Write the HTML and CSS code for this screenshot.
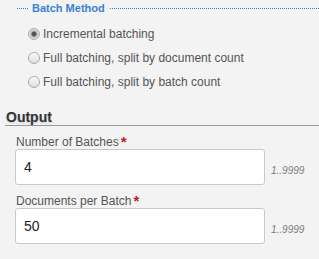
FILE: index.html
```html
<!DOCTYPE html>
<html lang="en">
<head>
<meta charset="utf-8">
<title>Batch settings</title>
<link rel="stylesheet" href="styles.css">
</head>
<body>
<div class="group">
  <div class="legend">
    <span class="legend-lead"></span>
    <span class="legend-text">Batch Method</span>
    <span class="legend-rule"></span>
  </div>
  <div class="options">
    <label class="option"><span class="radio radio-checked"></span>Incremental batching</label>
    <label class="option"><span class="radio"></span>Full batching, split by document count</label>
    <label class="option"><span class="radio"></span>Full batching, split by batch count</label>
  </div>
</div>
<section class="output">
  <h2 class="heading">Output</h2>
  <div class="field">
    <div class="field-label">Number of Batches<span class="req">*</span></div>
    <div class="field-row">
      <input class="field-input" type="text" value="4">
      <span class="range">1..9999</span>
    </div>
  </div>
  <div class="field">
    <div class="field-label">Documents per Batch<span class="req">*</span></div>
    <div class="field-row">
      <input class="field-input" type="text" value="50">
      <span class="range">1..9999</span>
    </div>
  </div>
</section>
</body>
</html>
```
FILE: styles.css
```css
html, body {
  margin: 0;
  padding: 0;
  background: #f3f3f3;
  font-family: "Liberation Sans", Arial, sans-serif;
}

.legend {
  display: flex;
  align-items: center;
  height: 17px;
  margin-left: 17px;
}

.legend-lead {
  width: 11px;
  height: 0;
  border-top: 1px dotted #3a80d2;
}

.legend-rule {
  flex: 1;
  height: 0;
  border-top: 1px dotted #3a80d2;
}

.legend-text {
  padding: 0 5px 0 4px;
  font-size: 11px;
  font-weight: bold;
  color: #3a80d2;
  line-height: 13px;
}

.options {
  padding-top: 5px;
  display: flex;
  flex-direction: column;
}

.option {
  display: flex;
  align-items: center;
  height: 24px;
  padding-left: 28px;
  font-size: 12px;
  color: #555;
}

.radio {
  box-sizing: border-box;
  width: 12px;
  height: 12px;
  margin-right: 3px;
  border-radius: 50%;
  border: 1px solid #ababab;
  background: linear-gradient(#fbfbfb, #dcdcdc);
}

.radio-checked {
  background: radial-gradient(circle, #4a4a4a 0, #5a5a5a 2px, #b9b9b9 3px, #e6e6e6 5px);
}

.output {
  margin-top: 15px;
}

.heading {
  margin: 0 0 0 5px;
  padding-left: 1px;
  font-size: 14px;
  font-weight: bold;
  line-height: 16px;
  color: #333;
  border-bottom: 1px solid #9a9a9a;
  text-shadow: 0 1px 2px rgba(0, 0, 0, 0.18);
}

.field {
  margin: 10px 0 0 15px;
}

.field-label {
  padding-left: 1px;
  font-size: 12px;
  line-height: 13px;
  color: #555;
}

.req {
  margin-left: 2px;
  color: #c41a1a;
  font-weight: bold;
  font-size: 15px;
  vertical-align: top;
  line-height: 12px;
}

.field-row {
  display: flex;
  align-items: center;
}

.field-input {
  box-sizing: border-box;
  width: 250px;
  height: 36px;
  margin: 0;
  padding: 0 8px;
  border: 1px solid #c9c9c9;
  border-radius: 3px;
  background: #fff;
  font-family: "Liberation Sans", Arial, sans-serif;
  font-size: 14px;
  color: #222;
  outline: none;
}

.range {
  margin: 6px 0 0 6px;
  font-size: 10px;
  font-style: italic;
  color: #7a7a7a;
}
```
